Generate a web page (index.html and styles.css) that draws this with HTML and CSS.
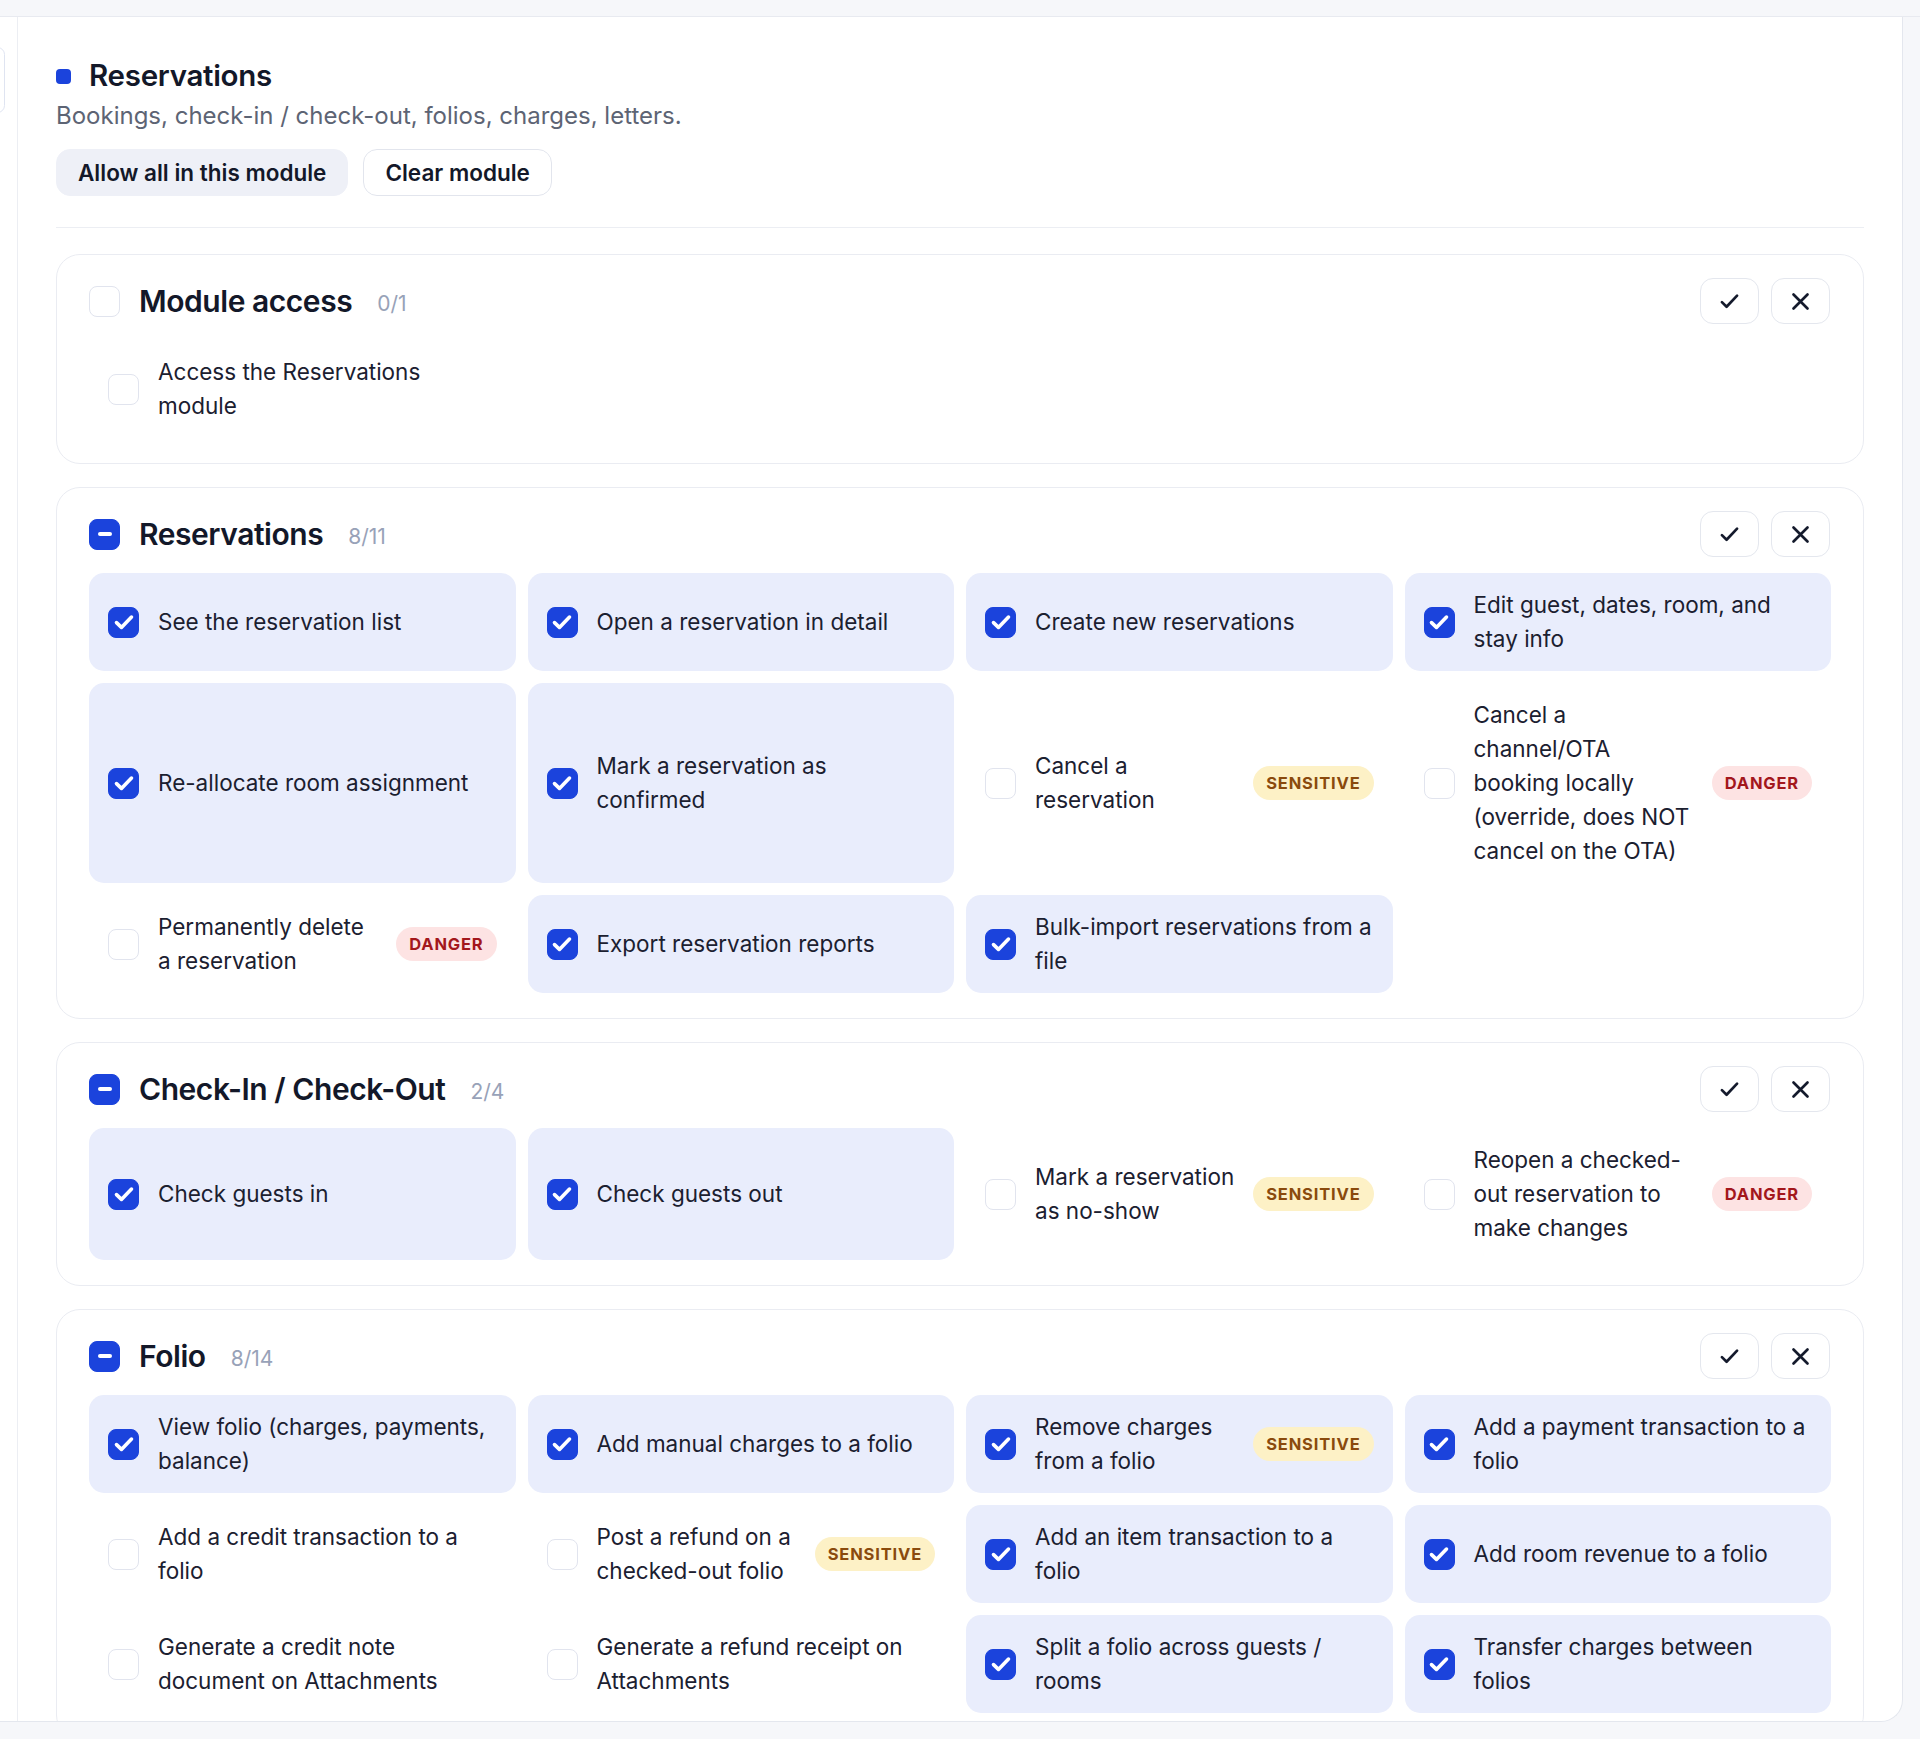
FILE: index.html
```html
<!DOCTYPE html>
<html lang="en">
<head>
  <meta charset="UTF-8" />
  <meta name="viewport" content="width=device-width, initial-scale=1" />
  <title>Role permissions - Reservations</title>
  <link rel="stylesheet" href="styles.css">
</head>
<body>
  <div class="topbar"></div>

  <div class="frame">
    <div class="rail"><span class="rail-tab"></span></div>

    <main class="content">
      <section class="module-head">
        <h1 class="module-title"><span class="module-dot"></span>Reservations</h1>
        <p class="module-desc">Bookings, check-in / check-out, folios, charges, letters.</p>
        <div class="module-actions">
          <button class="btn btn-soft">Allow all in this module</button>
          <button class="btn btn-outline">Clear module</button>
        </div>
      </section>

      <!-- Module access -->
      <section class="group">
        <header class="group-head">
          <span class="cb"></span>
          <h2 class="group-title">Module access</h2>
          <span class="group-count">0/1</span>
          <div class="group-tools">
            <button class="tool"><svg viewBox="0 0 18 18"><path d="M2.5 9.5l4 4L15.5 4"/></svg></button>
            <button class="tool"><svg viewBox="0 0 18 18"><path d="M3 3l12 12M15 3L3 15"/></svg></button>
          </div>
        </header>
        <div class="perm-grid">
          <label class="perm">
            <span class="cb"></span>
            <span class="perm-text">Access the Reservations module</span>
          </label>
        </div>
      </section>

      <!-- Reservations -->
      <section class="group">
        <header class="group-head">
          <span class="cb cb-mixed"><i></i></span>
          <h2 class="group-title">Reservations</h2>
          <span class="group-count">8/11</span>
          <div class="group-tools">
            <button class="tool"><svg viewBox="0 0 18 18"><path d="M2.5 9.5l4 4L15.5 4"/></svg></button>
            <button class="tool"><svg viewBox="0 0 18 18"><path d="M3 3l12 12M15 3L3 15"/></svg></button>
          </div>
        </header>
        <div class="perm-grid">
          <label class="perm on">
            <span class="cb"><svg viewBox="0 0 16 16"><path d="M3 8.4l3.3 3.2L13 4.7"/></svg></span>
            <span class="perm-text">See the reservation list</span>
          </label>
          <label class="perm on">
            <span class="cb"><svg viewBox="0 0 16 16"><path d="M3 8.4l3.3 3.2L13 4.7"/></svg></span>
            <span class="perm-text">Open a reservation in detail</span>
          </label>
          <label class="perm on">
            <span class="cb"><svg viewBox="0 0 16 16"><path d="M3 8.4l3.3 3.2L13 4.7"/></svg></span>
            <span class="perm-text">Create new reservations</span>
          </label>
          <label class="perm on">
            <span class="cb"><svg viewBox="0 0 16 16"><path d="M3 8.4l3.3 3.2L13 4.7"/></svg></span>
            <span class="perm-text">Edit guest, dates, room, and stay info</span>
          </label>
          <label class="perm on">
            <span class="cb"><svg viewBox="0 0 16 16"><path d="M3 8.4l3.3 3.2L13 4.7"/></svg></span>
            <span class="perm-text">Re-allocate room assignment</span>
          </label>
          <label class="perm on">
            <span class="cb"><svg viewBox="0 0 16 16"><path d="M3 8.4l3.3 3.2L13 4.7"/></svg></span>
            <span class="perm-text">Mark a reservation as confirmed</span>
          </label>
          <label class="perm">
            <span class="cb"></span>
            <span class="perm-text">Cancel a reservation</span>
            <span class="tag tag-warn">Sensitive</span>
          </label>
          <label class="perm">
            <span class="cb"></span>
            <span class="perm-text">Cancel a channel/OTA booking locally (override, does NOT cancel on the OTA)</span>
            <span class="tag tag-danger">Danger</span>
          </label>
          <label class="perm">
            <span class="cb"></span>
            <span class="perm-text">Permanently delete a reservation</span>
            <span class="tag tag-danger">Danger</span>
          </label>
          <label class="perm on">
            <span class="cb"><svg viewBox="0 0 16 16"><path d="M3 8.4l3.3 3.2L13 4.7"/></svg></span>
            <span class="perm-text">Export reservation reports</span>
          </label>
          <label class="perm on">
            <span class="cb"><svg viewBox="0 0 16 16"><path d="M3 8.4l3.3 3.2L13 4.7"/></svg></span>
            <span class="perm-text">Bulk-import reservations from a file</span>
          </label>
        </div>
      </section>

      <!-- Check-In / Check-Out -->
      <section class="group">
        <header class="group-head">
          <span class="cb cb-mixed"><i></i></span>
          <h2 class="group-title">Check-In / Check-Out</h2>
          <span class="group-count">2/4</span>
          <div class="group-tools">
            <button class="tool"><svg viewBox="0 0 18 18"><path d="M2.5 9.5l4 4L15.5 4"/></svg></button>
            <button class="tool"><svg viewBox="0 0 18 18"><path d="M3 3l12 12M15 3L3 15"/></svg></button>
          </div>
        </header>
        <div class="perm-grid">
          <label class="perm on">
            <span class="cb"><svg viewBox="0 0 16 16"><path d="M3 8.4l3.3 3.2L13 4.7"/></svg></span>
            <span class="perm-text">Check guests in</span>
          </label>
          <label class="perm on">
            <span class="cb"><svg viewBox="0 0 16 16"><path d="M3 8.4l3.3 3.2L13 4.7"/></svg></span>
            <span class="perm-text">Check guests out</span>
          </label>
          <label class="perm">
            <span class="cb"></span>
            <span class="perm-text">Mark a reservation as no-show</span>
            <span class="tag tag-warn">Sensitive</span>
          </label>
          <label class="perm">
            <span class="cb"></span>
            <span class="perm-text">Reopen a checked-out reservation to make changes</span>
            <span class="tag tag-danger">Danger</span>
          </label>
        </div>
      </section>

      <!-- Folio -->
      <section class="group">
        <header class="group-head">
          <span class="cb cb-mixed"><i></i></span>
          <h2 class="group-title">Folio</h2>
          <span class="group-count">8/14</span>
          <div class="group-tools">
            <button class="tool"><svg viewBox="0 0 18 18"><path d="M2.5 9.5l4 4L15.5 4"/></svg></button>
            <button class="tool"><svg viewBox="0 0 18 18"><path d="M3 3l12 12M15 3L3 15"/></svg></button>
          </div>
        </header>
        <div class="perm-grid">
          <label class="perm on">
            <span class="cb"><svg viewBox="0 0 16 16"><path d="M3 8.4l3.3 3.2L13 4.7"/></svg></span>
            <span class="perm-text">View folio (charges, payments, balance)</span>
          </label>
          <label class="perm on">
            <span class="cb"><svg viewBox="0 0 16 16"><path d="M3 8.4l3.3 3.2L13 4.7"/></svg></span>
            <span class="perm-text">Add manual charges to a folio</span>
          </label>
          <label class="perm on">
            <span class="cb"><svg viewBox="0 0 16 16"><path d="M3 8.4l3.3 3.2L13 4.7"/></svg></span>
            <span class="perm-text">Remove charges from a folio</span>
            <span class="tag tag-warn">Sensitive</span>
          </label>
          <label class="perm on">
            <span class="cb"><svg viewBox="0 0 16 16"><path d="M3 8.4l3.3 3.2L13 4.7"/></svg></span>
            <span class="perm-text">Add a payment transaction to a folio</span>
          </label>
          <label class="perm">
            <span class="cb"></span>
            <span class="perm-text">Add a credit transaction to a folio</span>
          </label>
          <label class="perm">
            <span class="cb"></span>
            <span class="perm-text">Post a refund on a checked-out folio</span>
            <span class="tag tag-warn">Sensitive</span>
          </label>
          <label class="perm on">
            <span class="cb"><svg viewBox="0 0 16 16"><path d="M3 8.4l3.3 3.2L13 4.7"/></svg></span>
            <span class="perm-text">Add an item transaction to a folio</span>
          </label>
          <label class="perm on">
            <span class="cb"><svg viewBox="0 0 16 16"><path d="M3 8.4l3.3 3.2L13 4.7"/></svg></span>
            <span class="perm-text">Add room revenue to a folio</span>
          </label>
          <label class="perm">
            <span class="cb"></span>
            <span class="perm-text">Generate a credit note document on Attachments</span>
          </label>
          <label class="perm">
            <span class="cb"></span>
            <span class="perm-text">Generate a refund receipt on Attachments</span>
          </label>
          <label class="perm on">
            <span class="cb"><svg viewBox="0 0 16 16"><path d="M3 8.4l3.3 3.2L13 4.7"/></svg></span>
            <span class="perm-text">Split a folio across guests / rooms</span>
          </label>
          <label class="perm on">
            <span class="cb"><svg viewBox="0 0 16 16"><path d="M3 8.4l3.3 3.2L13 4.7"/></svg></span>
            <span class="perm-text">Transfer charges between folios</span>
          </label>
        </div>
      </section>
    </main>
  </div>
</body>
</html>
```

FILE: styles.css
```css
body {
  margin: 0;
  background: #f6f7fa;
  font-family: Inter, "Liberation Sans", sans-serif;
  color: #1b2030;
}

.topbar {
  height: 16px;
  border-bottom: 1px solid #e8eaf0;
}

.frame {
  display: flex;
  width: 1903px;
  height: 1705px;
  background: #fff;
  border-right: 1px solid #e4e7ee;
  border-bottom: 1px solid #e4e7ee;
  border-bottom-right-radius: 22px;
  box-sizing: border-box;
  overflow: hidden;
}

.rail {
  position: relative;
  width: 17px;
  flex-shrink: 0;
  border-right: 1px solid #eceef3;
}

.rail-tab {
  position: absolute;
  left: -10px;
  top: 30px;
  width: 13px;
  height: 64px;
  border: 1px solid #dfe4f1;
  border-radius: 8px;
}

.content {
  flex: 1;
  padding: 39px 38px 0 38px;
}

/* module header */
.module-head {
  padding-bottom: 31px;
  border-bottom: 1px solid #eceef3;
  margin-bottom: 26px;
}

.module-title {
  display: flex;
  align-items: center;
  gap: 18px;
  margin: 0;
  font-size: 29.5px;
  font-weight: 600;
  line-height: 38px;
  color: #131829;
  letter-spacing: -0.01em;
}

.module-dot {
  width: 15px;
  height: 15px;
  border-radius: 4px;
  background: #1b43dc;
  margin-top: 3px;
}

.module-desc {
  margin: 7px 0 0;
  font-size: 24px;
  line-height: 30px;
  color: #5d6474;
}

.module-actions {
  display: flex;
  gap: 15px;
  margin-top: 18px;
}

.btn {
  height: 47px;
  padding: 0 21px;
  border-radius: 14px;
  font-family: inherit;
  font-size: 22.5px;
  font-weight: 600;
  color: #131829;
  cursor: pointer;
}

.btn-soft {
  background: #eef0f7;
  border: 1px solid #eef0f7;
}

.btn-outline {
  background: #fff;
  border: 1px solid #e2e5ed;
}

/* permission groups */
.group {
  border: 1px solid #eaecf2;
  border-radius: 24px;
  padding: 23px 32px 25px;
  margin-bottom: 23px;
}

.group-head {
  display: flex;
  align-items: center;
  height: 46px;
  margin-bottom: 16px;
}

.group-title {
  margin: 0 0 0 19px;
  font-size: 30px;
  font-weight: 600;
  color: #131829;
  letter-spacing: -0.015em;
}

.group-count {
  margin-left: 25px;
  margin-top: 4px;
  font-size: 21px;
  color: #98a2b8;
}

.group-tools {
  display: flex;
  gap: 12px;
  margin-left: auto;
  margin-right: 1px;
}

.tool {
  width: 59px;
  height: 46px;
  display: flex;
  align-items: center;
  justify-content: center;
  background: #fff;
  border: 1px solid #e4e7ee;
  border-radius: 13px;
  cursor: pointer;
}

.tool svg {
  width: 21px;
  height: 21px;
  fill: none;
  stroke: #141a2c;
  stroke-width: 2.3;
  stroke-linecap: round;
  stroke-linejoin: round;
}

.perm-grid {
  display: grid;
  grid-template-columns: repeat(4, 1fr);
  gap: 12px;
}

.perm {
  display: flex;
  align-items: center;
  padding: 15px 19px;
  border-radius: 15px;
  font-size: 22.5px;
  line-height: 34px;
  color: #1b2030;
  cursor: pointer;
}

.perm.on {
  background: #e9edfc;
}

.perm-text {
  flex: 1;
  min-width: 0;
  margin-left: 19px;
}

/* checkboxes */
.cb {
  width: 31px;
  height: 31px;
  flex-shrink: 0;
  box-sizing: border-box;
  border: 1.5px solid #e1e4ee;
  border-radius: 8px;
  background: #fff;
  display: flex;
  align-items: center;
  justify-content: center;
}

.perm.on .cb,
.cb-mixed {
  background: #1b43dc;
  border-color: #1b43dc;
}

.cb svg {
  width: 24px;
  height: 24px;
  fill: none;
  stroke: #fff;
  stroke-width: 2.4;
  stroke-linecap: round;
  stroke-linejoin: round;
}

.cb-mixed i {
  width: 14px;
  height: 4px;
  border-radius: 2px;
  background: #fff;
}

/* risk tags */
.tag {
  flex-shrink: 0;
  height: 34px;
  margin-left: 17px;
  padding: 0 13px;
  border-radius: 17px;
  display: flex;
  align-items: center;
  font-size: 16.5px;
  font-weight: 700;
  letter-spacing: 0.05em;
  text-transform: uppercase;
}

.tag-warn {
  background: #fdf1c6;
  color: #8a4a0d;
}

.tag-danger {
  background: #fde3e3;
  color: #a3171c;
}
```
